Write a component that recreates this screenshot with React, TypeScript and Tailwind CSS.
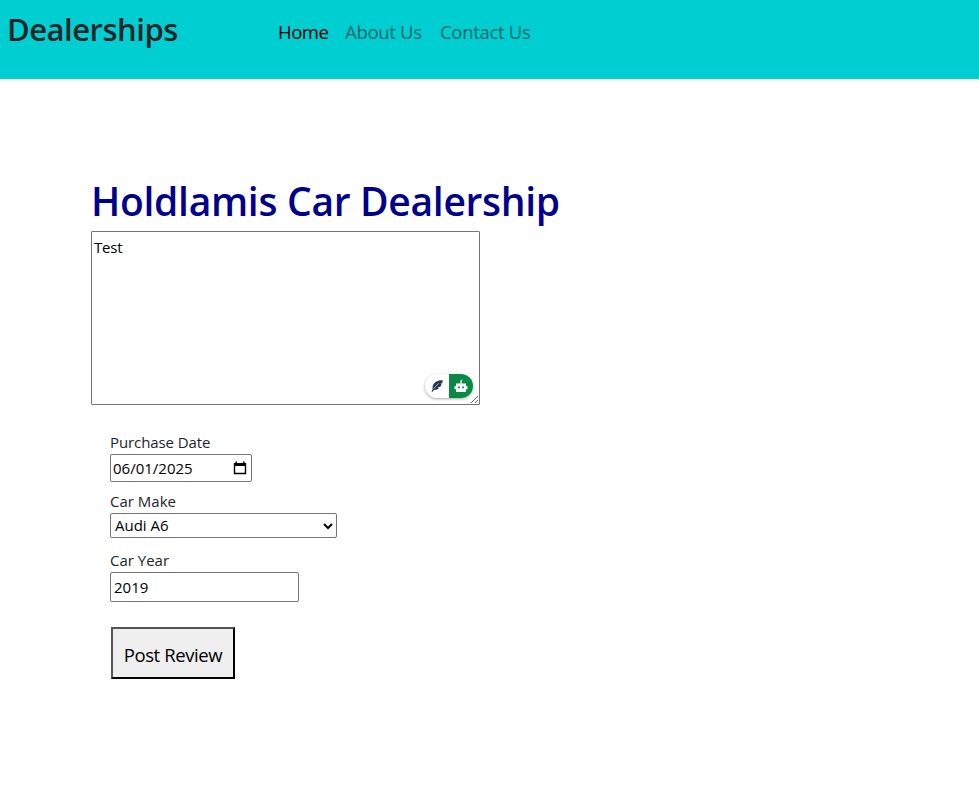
import { useState } from 'react';

function AssistantBadge() {
  return (
    <div className="absolute right-[7px] bottom-[7px] flex h-6 w-12 overflow-hidden rounded-full bg-white shadow-[0_1px_3px_rgba(0,0,0,0.35)]">
      <div className="flex w-6 items-center justify-center">
        <svg width="14" height="14" viewBox="0 0 14 14" fill="none">
          <path d="M12.8 1.2C8.6 1 4.6 2.4 3 6.2c-.5 1.2-.6 2.7-.3 3.8L1.6 12.6l.8.4 1.3-2.1c2 .3 4-.3 5.300-1.900L7.600 8.300l2.700-.5c.6-.8 1-1.700 1.300-2.500l-1.500-.3 2-.8c.4-1.100.7-2.100.7-3Z" fill="#243757" />
          <path d="M3.600 9.800 8.600 4.400" stroke="#fff" strokeWidth=".6" />
        </svg>
      </div>
      <div className="flex w-6 items-center justify-center bg-[#088a45]">
        <svg width="14" height="14" viewBox="0 0 14 14" fill="none">
          <path d="M7 5V2.500L8 .8" stroke="#fff" strokeWidth="1.300" />
          <path d="M2 4.500h10v2.800h1.500v3H12V13H2v-2.700H.5v-3H2Z" fill="#fff" />
          <path d="M4 7.500h1.800v1.800H4ZM8.200 7.500H10v1.800H8.200Z" fill="#088a45" />
        </svg>
      </div>
    </div>
  );
}

export default function App() {
  const [review, setReview] = useState('Test');
  return (
    <div className="min-h-[800px] w-full bg-white font-['Open_Sans','Noto_Sans',sans-serif] text-[#212529]">
      <header className="flex h-[79px] items-start bg-[#00ced1] pl-[7px]">
        <h2 className="mt-[9px] w-[271px] text-[31px] leading-10 font-semibold tracking-[-0.5px]">Dealerships</h2>
        <nav className="mt-[18px] flex whitespace-nowrap text-[18.500px] leading-7">
          <a className="w-[67px] tracking-[-0.5px] text-black">Home</a>
          <a className="w-[95px] tracking-[-0.300px] text-[#01676a]">About Us</a>
          <a className="tracking-[-0.300px] text-[#01676a]">Contact Us</a>
        </nav>
      </header>
      <main className="pt-[98px] pl-[91px]">
        <h1 className="h-[54px] text-[39px] leading-[48px] font-semibold tracking-[-0.300px] whitespace-nowrap text-[#00008b]">Holdlamis Car Dealership</h1>
        <div className="relative h-[174px] w-[389px]">
          <textarea value={review} onChange={(e) => setReview(e.target.value)} spellCheck={false} className="block h-[174px] w-[389px] resize rounded-[1px] border border-[#767676] px-[2px] py-[3px] text-[15px] leading-6 tracking-[-0.200px] text-black outline-none" />
          <AssistantBadge />
        </div>
        <form className="flex flex-col items-start pt-[26px] pl-[19px] text-[15px] leading-[23px]">
          <label className="h-[23px] tracking-[-0.100px]">Purchase Date</label>
          <div className="flex h-7 w-[142px] items-center justify-between rounded-[2px] border border-[#767676] pr-[4px] pl-[2px] text-black">
            <span>06/01/2025</span>
            <svg width="14" height="14" viewBox="0 0 14 14">
              <path d="M1.500 3h11v9.500h-11Z" fill="none" stroke="#000" strokeWidth="1.400" />
              <path d="M1 2h12v3H1ZM2.500.5H4V2H2.500ZM10 .5h1.500V2H10Z" />
            </svg>
          </div>
          <label className="mt-[8px] h-[23px]">Car Make</label>
          <div className="flex h-[25px] w-[227px] items-center justify-between rounded-[2px] border border-[#767676] pr-[3px] pl-1 text-black">
            <span>Audi A6</span>
            <svg width="10" height="8" viewBox="0 0 10 8" fill="none">
              <path d="m1 2 4 4 4-4" stroke="#000" strokeWidth="2" />
            </svg>
          </div>
          <label className="mt-[11px] h-[23px]">Car Year</label>
          <input defaultValue="2019" className="h-[30px] w-[189px] rounded-[2px] border border-[#767676] px-[3px] text-black outline-none" />
          <button type="button" className="mt-[25px] ml-px h-[52px] w-[124px] border-2 border-t-[#555] border-r-black border-b-black border-l-[#555] bg-[#efefef] pt-[2px] text-[18.500px] tracking-[-0.400px] whitespace-nowrap text-black">Post Review</button>
        </form>
      </main>
    </div>
  );
}
